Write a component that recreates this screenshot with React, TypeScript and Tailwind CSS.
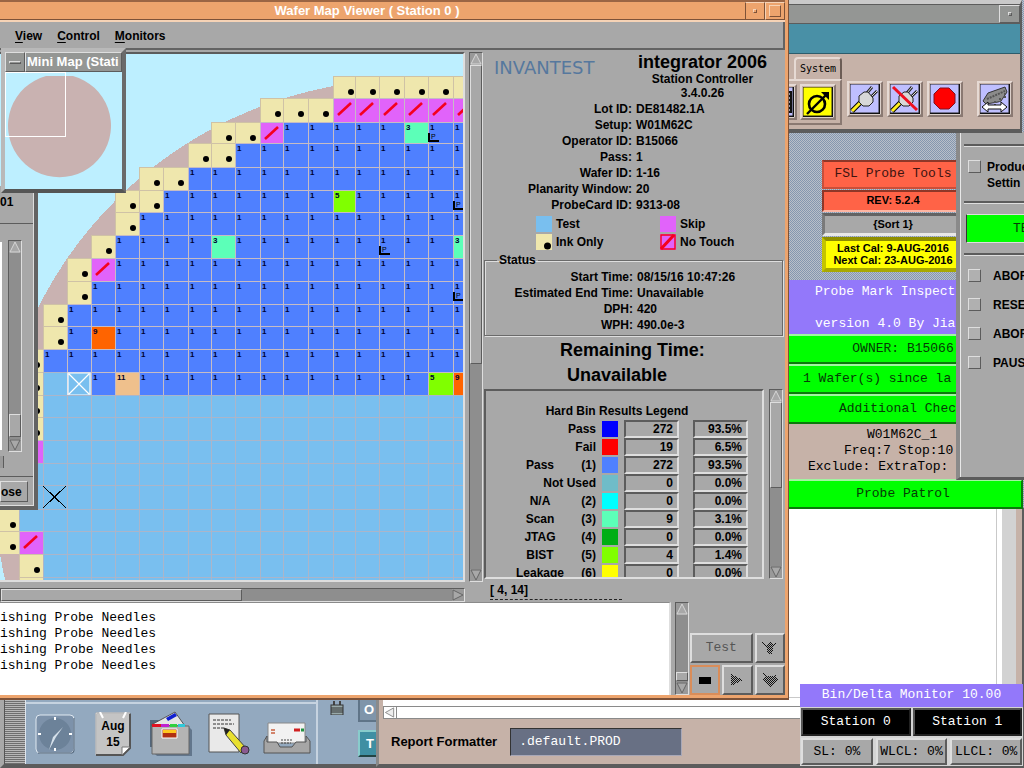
import type { ReactNode } from "react";

const RAISED = "border-2 border-t-[#dedede] border-l-[#dedede] border-r-[#5c5c5c] border-b-[#5c5c5c]";
const THIN = "border border-t-[#dedede] border-l-[#dedede] border-r-[#5c5c5c] border-b-[#5c5c5c]";
const SUNKEN = "border-2 border-t-[#5c5c5c] border-l-[#5c5c5c] border-r-[#dedede] border-b-[#dedede]";
const SANS = "font-['Liberation_Sans',sans-serif]";
const MONO = "font-['Liberation_Mono',monospace] font-normal text-[13px] leading-4";

/* ---------- wafer map ---------- */

const COL_X = [-5, 19, 43, 67, 91, 115, 139, 163, 188, 211, 235, 260, 283, 308, 333, 355, 379, 404, 428, 453, 477];
const ROW_Y = [76, 98, 122, 143, 167, 190, 212, 235, 258, 281, 304, 326, 349, 372, 395, 417, 440, 463, 485, 509, 531, 554, 577, 600];

// "." off wafer, o ink only, n no touch, t test, s selected, other letters are bins
const ROWS = [
  "..............oooooo",
  "...........ooonnnnnn",
  ".........oon11111311",
  "........oo1111111111",
  "......oo111111111111",
  ".....oo1111111511111",
  ".....o11111111111111",
  "....o111131111111113",
  "...on111111111111111",
  "...o1111111111111111",
  "..o11111111111111111",
  "..o19111111111111111",
  ".o111111111111111111",
  ".ots1e11111111111159",
  ".otttttttttttttttttt",
  ".otttttttttttttttttt",
  ".ntttttttttttttttttt",
  ".ttttttttttttttttttt",
  ".ttttttttttttttttttt",
  "ottttttttttttttttttt",
  "ontttttttttttttttttt",
  ".otttttttttttttttttt",
  ".otttttttttttttttttt",
].map((r) => r.padEnd(20, "1"));

const FILL: Record<string, string> = {
  o: "#efe7ad", n: "#e163fa", t: "#79bfef", s: "#79bfef",
  "1": "#4f80ff", "3": "#5cffb8", "5": "#80ff00", "9": "#ff6400", e: "#efc08c",
};

const PROBES: [number, number][] = [[2, 18], [5, 19], [7, 16], [9, 19]];

function WaferMap() {
  return (
    <svg className="block h-[526px] w-full" viewBox="0 54 463 526" preserveAspectRatio="xMinYMin slice" shapeRendering="crispEdges">
      <rect x="0" y="54" width="600" height="526" fill="#bdefff" />
      <ellipse cx="410" cy="490" rx="415" ry="411" fill="#c9b2b1" />
      {ROWS.map((row, r) =>
        row.split("").map((k, c) => {
          if (k === ".") return null;
          const x = COL_X[c];
          const y = ROW_Y[r];
          const w = COL_X[c + 1] - x;
          const h = ROW_Y[r + 1] - y;
          const line = k === "t" ? "#abb5c9" : k === "o" ? "#cfc2a6" : "#c6bcc4";
          return (
            <g key={`${r}-${c}`}>
              <rect x={x} y={y} width={w} height={h} fill={line} />
              <rect x={x + 1} y={y + 1} width={w - 1} height={h - 1} fill={FILL[k]} />
              {k === "o" && <circle cx={x + 18} cy={y + 16} r="3" fill="#000" shapeRendering="auto" />}
              {k === "n" && <path d={`M${x + 5} ${y + 17}L${x + 18} ${y + 5}`} stroke="#f5001e" strokeWidth="2.6" shapeRendering="auto" />}
              {/[1359e]/.test(k) && (
                <text x={x + 2} y={y + 8} fontSize="8" fontWeight="700" fontFamily="Liberation Sans, sans-serif" fill="#000030">
                  {k === "e" ? "11" : k}
                </text>
              )}
              {k === "s" && (
                <path d={`M${x + 1} ${y + 1}h${w - 2}v${h - 1}h-${w - 2}zM${x + 2} ${y + 2}l${w - 4} ${h - 3}M${x + w - 2} ${y + 2}l-${w - 4} ${h - 3}`} fill="none" stroke="#fff" strokeWidth="1.2" shapeRendering="auto" />
              )}
            </g>
          );
        })
      )}
      {PROBES.map(([r, c]) => (
        <g key={`p${r}-${c}`}>
          <path d={`M${COL_X[c] + 1} ${ROW_Y[r] + 11}v8h10`} fill="none" stroke="#000" strokeWidth="2" />
          <text x={COL_X[c] + 3} y={ROW_Y[r] + 17} fontSize="7" fontFamily="Liberation Sans, sans-serif" fontWeight="400" fill="#000">P</text>
        </g>
      ))}
      <path d="M43 486l23 22M66 486l-23 22" stroke="#000" strokeWidth="1" fill="none" />
    </svg>
  );
}

/* ---------- scroll bars ---------- */

type Dir = "up" | "down" | "left" | "right";

function Arrow({ dir }: { dir: Dir }) {
  const shape = { up: "6,1 11,11 1,11", down: "1,1 11,1 6,11", left: "1,6 11,1 11,11", right: "1,1 11,6 1,11" }[dir];
  return (
    <svg className="block size-3 shrink-0" viewBox="0 0 12 12">
      <rect width="12" height="12" fill="#999" />
      <polygon points={shape} fill="#a8a8a8" stroke={dir === "up" || dir === "left" ? "#d6d6d6" : "#666"} />
    </svg>
  );
}

function Scroll({ parts, horizontal = false, start = true, className = "" }: { parts: [number, number, number]; horizontal?: boolean; start?: boolean; className?: string }) {
  return (
    <div aria-hidden className={`flex shrink-0 border border-t-[#5c5c5c] border-l-[#5c5c5c] border-r-[#dedede] border-b-[#dedede] bg-[#8e8e8e] ${horizontal ? "flex-row" : "w-3.5 flex-col"} ${className}`}>
      {start && <Arrow dir={horizontal ? "left" : "up"} />}
      <div style={{ flexGrow: parts[0] }} />
      <div className={`bg-[#a8a8a8] ${THIN}`} style={{ flexGrow: parts[1] }} />
      <div style={{ flexGrow: parts[2] }} />
      <Arrow dir={horizontal ? "right" : "down"} />
    </div>
  );
}

/* ---------- wafer map viewer ---------- */

const LOT: [string, string][] = [
  ["Lot ID:", "DE81482.1A"], ["Setup:", "W01M62C"], ["Operator ID:", "B15066"], ["Pass:", "1"],
  ["Wafer ID:", "1-16"], ["Planarity Window:", "20"], ["ProbeCard ID:", "9313-08"],
];
const STATUS: [string, string][] = [
  ["Start Time:", "08/15/16 10:47:26"], ["Estimated End Time:", "Unavailable"], ["DPH:", "420"], ["WPH:", "490.0e-3"],
];
const BINS: [string, string, string, string, string][] = [
  ["Pass", "", "bg-[#0000ff]", "272", "93.5%"],
  ["Fail", "", "bg-[#ff0000]", "19", "6.5%"],
  ["Pass", "(1)", "bg-[#4f80ff]", "272", "93.5%"],
  ["Not Used", "", "bg-[#6fbcc8]", "0", "0.0%"],
  ["N/A", "(2)", "bg-[#00ffff]", "0", "0.0%"],
  ["Scan", "(3)", "bg-[#5cffb8]", "9", "3.1%"],
  ["JTAG", "(4)", "bg-[#00ae14]", "0", "0.0%"],
  ["BIST", "(5)", "bg-[#80ff00]", "4", "1.4%"],
  ["Leakage", "(6)", "bg-[#ffff00]", "0", "0.0%"],
];

function Facts({ rows }: { rows: [string, string][] }) {
  return (
    <dl className="grid grid-cols-[148px_1fr] gap-x-1 leading-4">
      {rows.map(([k, v]) => (
        <div key={k} className="contents">
          <dt className="text-right whitespace-nowrap">{k}</dt>
          <dd className="whitespace-nowrap">{v}</dd>
        </div>
      ))}
    </dl>
  );
}

function LegendItem({ kind, label }: { kind: "test" | "skip" | "ink" | "touch"; label: string }) {
  const fill = { test: "#79bfef", skip: "#e163fa", ink: "#efe7ad", touch: "#e163fa" }[kind];
  return (
    <div className="flex h-[18px] items-center gap-1">
      <svg className="size-4" viewBox="0 0 16 16">
        <rect width="16" height="16" fill={fill} />
        {kind === "ink" && <circle cx="11.5" cy="12" r="3.5" />}
        {kind === "touch" && (
          <>
            <path d="M1 1h14v14h-14z" fill="none" stroke="#f5001e" strokeWidth="1.4" />
            <path d="M1 15L14 1" stroke="#f5001e" strokeWidth="3" />
          </>
        )}
      </svg>
      {label}
    </div>
  );
}

function InfoPanel() {
  return (
    <section className="flex min-w-0 flex-1 flex-col pt-0.5">
      <header className="flex items-start justify-between pr-[18px] pb-px pl-2.5">
        <div className="pt-1 font-['DejaVu_Sans',sans-serif] text-[18px] leading-6 font-normal text-[#56789e]">INVANTEST</div>
        <div className="text-center">
          <h1 className="text-[18px] leading-5">integrator 2006</h1>
          <p className="leading-[14px]">Station Controller</p>
          <p className="leading-[14px]">3.4.0.26</p>
        </div>
      </header>
      <Facts rows={LOT} />
      <div className="grid grid-cols-[124px_1fr] pt-0.5 pl-[52px]">
        <LegendItem kind="test" label="Test" />
        <LegendItem kind="skip" label="Skip" />
        <LegendItem kind="ink" label="Ink Only" />
        <LegendItem kind="touch" label="No Touch" />
      </div>
      <fieldset className="mt-px mr-0.5 border border-[#6a6a6a] pt-px pb-0.5 shadow-[inset_1px_1px_0_#dedede,1px_1px_0_#dedede]">
        <legend className="ml-3 px-0.5 leading-4">Status</legend>
        <Facts rows={STATUS} />
      </fieldset>
      <div className="pt-0.5 text-[18px] leading-[25px]">
        <p className="pl-[76px]">Remaining Time:</p>
        <p className="pl-[83px]">Unavailable</p>
      </div>
      <div className="mt-px flex h-[190px] justify-between pr-0.5">
        <div className={`w-[280px] overflow-hidden pt-[11px] ${SUNKEN}`}>
          <table className="table-fixed border-collapse">
            <caption className="pr-1 text-center leading-[18px]">Hard Bin Results Legend</caption>
            <tbody>
              {BINS.map(([name, num, color, count, pct], i) => (
                <tr key={i} className="h-[18px] leading-[14px]">
                  {num ? (
                    <>
                      <td className="w-[82px] pl-[26px] text-center">{name}</td>
                      <td className="w-[28px] text-right whitespace-nowrap">{num}</td>
                    </>
                  ) : (
                    <td colSpan={2} className="w-[110px] text-right">{name}</td>
                  )}
                  <td className="w-[28px] pl-1.5"><div className={`size-4 ${color}`} /></td>
                  <td className="w-[58px]"><div className={`w-[55px] pr-1 text-right ${SUNKEN}`}>{count}</div></td>
                  <td className="w-[70px] pl-[11px]"><div className={`w-[55px] pr-1 text-right ${SUNKEN}`}>{pct}</div></td>
                </tr>
              ))}
            </tbody>
          </table>
        </div>
        <Scroll parts={[0, 87, 80]} />
      </div>
      <p className="pt-0.5 pl-1.5 leading-[18px]">[ 4, 14]</p>
      <div className="ml-1.5 w-[132px] border-t border-dashed border-[#222]" />
    </section>
  );
}

function PadButton({ label, children, className = "" }: { label?: string; children?: ReactNode; className?: string }) {
  return (
    <button type="button" aria-label={label} className={`flex items-center justify-center bg-[#a8a8a8] ${RAISED} ${className}`}>
      {children}
    </button>
  );
}

function Stipple({ d }: { d: string }) {
  return (
    <svg className="size-4" viewBox="0 0 16 16" shapeRendering="crispEdges">
      <defs>
        <pattern id="stipple" width="2" height="2" patternUnits="userSpaceOnUse">
          <rect width="1" height="1" fill="#111" />
          <rect x="1" y="1" width="1" height="1" fill="#111" />
        </pattern>
      </defs>
      <path d={d} fill="url(#stipple)" />
    </svg>
  );
}

function WaferViewer() {
  return (
    <main className="absolute top-0 left-0 h-[700px] w-[789px] bg-[#7d5238] pr-px pb-0.5">
      <div className="flex h-full flex-col bg-[#eda46d] pr-[3px] pb-[3px]">
        <header className="flex h-[22px] shrink-0 border-t-2 border-b-2 border-t-[#9a6544] border-b-[#f6d3b6] text-white">
          <h2 className="flex-1 border-b border-[#7d5238] pr-[11px] text-center text-[13px] leading-[18px]">Wafer Map Viewer ( Station 0 )</h2>
          <button type="button" aria-label="Minimize" className="flex w-5 items-center justify-center border border-t-[#f6d3b6] border-l-[#7d5238] border-r-[#7d5238] border-b-[#7d5238]">
            <span className="size-1 border border-t-[#f6d3b6] border-l-[#f6d3b6] border-r-[#7d5238] border-b-[#7d5238]" />
          </button>
          <button type="button" aria-label="Maximize" className="flex w-5 items-center justify-center border border-t-[#f6d3b6] border-l-[#f6d3b6] border-r-[#7d5238] border-b-[#7d5238]">
            <span className="size-3 border border-t-[#f6d3b6] border-l-[#f6d3b6] border-r-[#7d5238] border-b-[#7d5238]" />
          </button>
        </header>
        <div className="flex min-h-0 flex-1 flex-col bg-[#a8a8a8]">
          <nav className="flex h-[28px] shrink-0 items-center gap-[15px] border-b-2 border-r-2 border-[#636363] pt-px pl-[15px]">
            {["View", "Control", "Monitors"].map((m) => (
              <button key={m} type="button" className="underline-offset-2 first-letter:underline">{m}</button>
            ))}
          </nav>
          <div className="flex h-[552px] shrink-0">
            <div className="flex w-[467px] flex-col pt-0.5">
              <div className="mr-0.5 border-t-2 border-r-2 border-b-2 border-t-[#5c5c5c] border-r-[#dedede] border-b-[#dedede]">
                <WaferMap />
              </div>
              <Scroll horizontal start={false} parts={[0, 241, 211]} className="mt-1.5 mr-0.5 h-3.5" />
            </div>
            <Scroll parts={[0, 299, 207]} className="mt-0.5 mb-5 ml-0.5" />
            <div className="w-px" />
            <InfoPanel />
          </div>
          <div className="flex min-h-0 flex-1">
            <textarea readOnly aria-label="Log" className={`min-w-0 flex-1 resize-none border-t border-r-2 border-t-[#8a8a8a] border-r-[#dedede] bg-white pt-[7px] outline-none ${MONO}`} defaultValue={Array(4).fill("ishing Probe Needles").join("\n")} />
            <Scroll parts={[61, 7, 1]} className="ml-1" />
            <div className="flex w-24 flex-col justify-end">
              <div className="grid grid-cols-3 gap-0.5 pl-px">
                <PadButton className={`col-span-2 h-[30px] text-[#555] ${MONO}`}>Test</PadButton>
                <PadButton label="Raise"><Stipple d="M0 2l5 3L8 1l3 4 5-3-5 6-1 6H6L5 9z" /></PadButton>
                <PadButton label="Stop" className="h-[30px] !border-[#d98d5a]"><span className="h-[7px] w-3 bg-black" /></PadButton>
                <PadButton label="Run"><Stipple d="M2 2l12 6-12 6z" /></PadButton>
                <PadButton label="Lower"><Stipple d="M1 1l4 3h6l4-3-2 4 3 2-8 8-8-8 3-2z" /></PadButton>
              </div>
            </div>
          </div>
        </div>
      </div>
    </main>
  );
}

function SideDialog() {
  return (
    <aside className="absolute top-[186px] left-0 flex h-[324px] w-[38px] flex-col border-r-4 border-b-4 border-r-[#636363] border-b-[#636363] bg-[#a8a8a8] shadow-[inset_-1px_-1px_0_#dedede]">
      <p className="h-[37px] pt-2 leading-4">01</p>
      <div className="mr-px border-t border-[#5c5c5c]" />
      <div className="mt-4 flex h-[212px] gap-1.5">
        <div className="my-0.5 w-0.5 bg-white" />
        <Scroll parts={[164, 21, 2]} />
      </div>
      <div className="mt-1 h-3 w-1 overflow-hidden border-r border-[#5c5c5c] bg-[#999]" />
      <div className="mt-2 mr-px border-t border-[#5c5c5c]" />
      <button type="button" className={`mt-1 mr-1.5 h-[21px] pr-3 text-right ${THIN}`}>ose</button>
    </aside>
  );
}

function MiniMap() {
  return (
    <section className="absolute top-12 left-px flex h-[145px] w-[125px] flex-col border-4 border-t-[#b9b9b9] border-l-[#b9b9b9] border-r-[#6a6a6a] border-b-[#555] bg-[#949694]">
      <header className="flex h-5 shrink-0 text-white">
        <button type="button" aria-label="Window menu" className={`flex w-5 shrink-0 items-center justify-center ${THIN}`}>
          <span className={`h-[3px] w-3 ${THIN}`} />
        </button>
        <h2 className={`min-w-0 flex-1 overflow-hidden pl-px text-[13px] leading-[18px] whitespace-nowrap ${THIN}`}>Mini Map (Stati</h2>
      </header>
      <svg className="block min-h-0 w-full flex-1" viewBox="0 0 117 117" preserveAspectRatio="xMinYMin slice">
        <rect width="130" height="130" fill="#bdefff" />
        <path d="M41 4H68A51.5 51.5 0 1 1 41 4z" fill="#c9b2b1" />
        <rect x="0.5" y="0.5" width="60" height="64" fill="none" stroke="#fff" />
      </svg>
    </section>
  );
}

/* ---------- toolbar window ---------- */

function ToolIcon({ label, bg = "#bfbfff", children }: { label: string; bg?: string; children: ReactNode }) {
  return (
    <button type="button" aria-label={label} className="flex size-9 shrink-0 items-center justify-center border-2 border-t-[#e6dad4] border-l-[#e6dad4] border-r-[#8a7972] border-b-[#8a7972]">
      <svg className="size-[31px]" viewBox="0 0 31 31">
        <rect width="31" height="31" fill="#000" />
        <rect width="29" height="29" fill={bg} stroke="#222" />
        <path d="M30.5 0V30.5H0" stroke="#dcd0ca" fill="none" />
        {children}
      </svg>
    </button>
  );
}

function Plug() {
  return (
    <>
      <path d="M2 27L11 18" stroke="#000" strokeWidth="5" />
      <path d="M2 27L11 18" stroke="#ffef20" strokeWidth="3" />
      <path d="M17 9l5-6M21 13l6-6" stroke="#222" strokeWidth="2.8" />
      <path d="M17 9l5-6M21 13l6-6" stroke="#ddd" strokeWidth="1" />
      <path d="M9 12l5-4h4l5 6v4l-4 4h-6l-4-4z" fill="#d8d8d8" stroke="#222" />
    </>
  );
}

function Toolbar() {
  return (
    <section className="absolute top-0 right-0.5 flex h-[133px] w-[238px] flex-col border-r-2 border-b-4 border-r-[#5c5c5c] border-b-[#5c5c5c] border-t-4 border-t-[#c9c9c9] bg-[#c6b2a8]">
      <header className="flex h-5 shrink-0 justify-end border-y border-y-[#5c5c5c] bg-[#949694]">
        <button type="button" aria-label="Minimize" className={`flex w-[21px] items-center justify-center ${THIN}`}>
          <span className={`size-1 ${THIN}`} />
        </button>
      </header>
      <div className="h-[30px] shrink-0 border-b border-[#2c5c6c] bg-[#4990a6]" />
      <div className="flex gap-[5px] pt-[3px]">
        <div className="w-[58px] shrink-0">
          <div className="ml-2.5 flex h-[22px] w-12 items-center justify-center rounded-t border-t-2 border-r-2 border-l-2 border-t-[#e6dad4] border-r-[#6b5c55] border-l-[#e6dad4] font-['DejaVu_Sans_Mono',monospace] text-[10px] font-normal">System</div>
          <div className="flex h-[46px] items-center justify-end gap-[3px] border-2 border-t-[#e6dad4] border-r-[#8a7972] border-b-[#8a7972] border-l-[#c6b2a8] pr-1">
            <ToolIcon label="List">
              <path d="M14 5h13v20H14zM16 9h10M16 13h10M16 17h10M16 21h10" fill="#9a9aae" stroke="#111" strokeWidth="2" />
            </ToolIcon>
            <ToolIcon label="Diameter" bg="#ffff00">
              <circle cx="14" cy="17" r="8" fill="none" stroke="#000" strokeWidth="2.6" />
              <path d="M4 27L24 7" stroke="#000" strokeWidth="2.4" />
              <path d="M18 5h8v8z" />
            </ToolIcon>
          </div>
        </div>
        <div className="flex flex-1 gap-1 pt-6">
          <ToolIcon label="Connect"><Plug /></ToolIcon>
          <ToolIcon label="Disconnect">
            <Plug />
            <path d="M3 3L27 26" stroke="#ee1020" strokeWidth="3" />
          </ToolIcon>
          <ToolIcon label="Stop">
            <path d="M10 4h9l6 6v9l-6 6h-9l-6-6v-9z" fill="#ff0000" stroke="#801020" />
          </ToolIcon>
          <div className="w-1.5" />
          <ToolIcon label="Transfer">
            <path d="M3 17L8 9l17-6 2 5-6 9-3 1-12 2z" fill="#8b8b8b" stroke="#333" />
            <path d="M7 15l18-8M15 17v4M20 14v4M25 9v5" stroke="#555" strokeWidth="2" strokeDasharray="2 1" />
            <path d="M2 23l6-5v3h13v-3l6 5-6 5v-3H8v3z" fill="#fff" stroke="#111" />
          </ToolIcon>
        </div>
      </div>
    </section>
  );
}

/* ---------- right hand windows ---------- */

function ProbeTools() {
  return (
    <section className="absolute top-[160px] left-[822px] flex w-[142px] flex-col gap-px text-center">
      <div className={`h-[29px] border-2 border-t-[#8f3728] border-r-[#ffa994] border-b-[#c94f3a] border-l-[#c94f3a] bg-[#ff6347] pt-1 text-[#401410] ${MONO}`}>FSL Probe Tools</div>
      <div className="h-[22px] border-2 border-t-[#8f3728] border-r-[#ffa994] border-b-[#ffb5a2] border-l-[#8f3728] bg-[#ff6347] text-[11px] leading-[17px]">REV: 5.2.4</div>
      <div className="h-[23px] border-3 border-t-[#636363] border-r-[#dedede] border-b-[#e8e8e8] border-l-[#7a7a7a] bg-[#a8a8a8] text-[11px] leading-[17px]">{"{Sort 1}"}</div>
      <div className="h-[35px] border-4 border-t-[#8f8f00] border-r-[#ffff80] border-b-[#a8a800] border-l-[#c4c400] bg-[#ffff00] text-[11px] leading-3 whitespace-nowrap">
        <p className="pt-px">Last Cal: 9-AUG-2016</p>
        <p>Next Cal: 23-AUG-2016</p>
      </div>
    </section>
  );
}

const GREEN = "h-[30px] border-y-2 border-r-2 border-t-[#a0f5a0] border-r-[#0a7a0a] border-b-[#0a7a0a] bg-[#00ff00] pt-[5px] whitespace-pre text-[#063a06]";

function ProbeMark() {
  return (
    <section className={`absolute top-[280px] left-[785px] w-[238px] overflow-hidden ${MONO}`}>
      <div className="h-[54px] bg-[#9378fa] pt-1 pl-[30px] whitespace-pre text-white">
        <p>Probe Mark Inspect</p>
        <p className="pt-4">version 4.0 By Jia</p>
      </div>
      <div className={`${GREEN} text-center`}>OWNER: B15066</div>
      <div className={`${GREEN} pl-[18px]`}>1 Wafer(s) since la</div>
      <div className={`${GREEN} pl-[54px]`}>Additional Chec</div>
      <div className="h-[55px] bg-[#c6b2a8] pt-[3px] whitespace-pre">
        <p className="pl-[82px]">W01M62C_1</p>
        <p className="pl-[59px]">Freq:7 Stop:10</p>
        <p className="pl-[23px]">Exclude: ExtraTop:</p>
      </div>
      <div className={`${GREEN} text-center`}>Probe Patrol</div>
    </section>
  );
}

function Check({ children, wide = false }: { children: ReactNode; wide?: boolean }) {
  return (
    <label className={`flex items-start whitespace-nowrap ${wide ? "gap-3" : "gap-1.5"}`}>
      <input type="checkbox" className={`mt-px size-[13px] shrink-0 appearance-none bg-[#b0b0b0] ${THIN}`} />
      <span className="leading-4">{children}</span>
    </label>
  );
}

function OptionsDialog() {
  const rule = "border-t-2 border-b border-t-[#5c5c5c] border-b-[#dedede]";
  return (
    <section className="absolute top-[132px] right-0 flex h-[348px] w-[68px] flex-col overflow-hidden border-b-[3px] border-l-4 border-b-[#5c5c5c] border-l-[#8a8a8a] bg-[#a8a8a8] pl-1 shadow-[inset_1px_0_0_#e8e8e8]">
      <div className={`mt-3 ${rule}`} />
      <div className="mt-3 pl-1"><Check>Produc<br />Settin</Check></div>
      <div className={`mt-2.5 ${rule}`} />
      <button type="button" className={`mt-2.5 ml-0.5 h-[29px] shrink-0 border-y border-l border-t-[#dedede] border-l-[#333] border-b-[#dedede] bg-[#00ff00] pl-[46px] text-left text-[#063a06] ${MONO}`}>TE</button>
      <div className={`mt-2.5 ${rule}`} />
      <div className="mt-3 flex flex-col gap-[13px] pl-1">
        <Check wide>ABOR</Check>
        <Check wide>RESE</Check>
        <Check wide>ABOR</Check>
        <Check wide>PAUS</Check>
      </div>
    </section>
  );
}

function ReportWindow() {
  return (
    <section className="absolute top-[508px] right-0 bottom-0 left-[375px] flex flex-col border-r-2 border-b-4 border-l-4 border-r-[#5c5c5c] border-b-[#5c5c5c] border-l-[#8a8a8a] bg-[#c6b2a8]">
      <div className="flex flex-1 pl-1">
        <div className="flex-1 border-r border-b border-[#c9c9c9] bg-white" />
        <div className="w-[5px] bg-white" />
        <div className="mr-1.5 w-3.5 bg-[#d2d2d2]" />
      </div>
      <div className="ml-1 h-2 bg-white" />
      <div className="mr-6 ml-1 flex h-[13px] items-stretch border border-[#8a8a8a] bg-white">
        <svg className="w-3" viewBox="0 0 12 12"><polygon points="1,6 10,1 10,11" fill="#eee" stroke="#888" /></svg>
        <div className="flex-1 border-l border-[#8a8a8a]" />
      </div>
      <form className="flex h-[45px] items-center gap-[13px] pl-3">
        <label htmlFor="formatter" className="text-[13px]">Report Formatter</label>
        <input id="formatter" defaultValue=".default.PROD" className={`h-7 w-[172px] border border-t-[#333] border-l-[#333] border-r-[#a8a8b8] border-b-[#a8a8b8] bg-[#687084] px-2 text-white outline-none ${MONO}`} />
      </form>
    </section>
  );
}

function BinMonitor() {
  return (
    <section className={`absolute right-px bottom-0.5 flex w-[223px] flex-col bg-[#d4d4d4] text-center ${MONO}`}>
      <h2 className="h-[23px] bg-[#9378fa] leading-[22px] text-white">Bin/Delta Monitor 10.00</h2>
      <div className="grid grid-cols-2 gap-0.5 px-px pt-px">
        {["Station 0", "Station 1"].map((s) => (
          <button key={s} type="button" className="h-[28px] border-2 border-t-[#555] border-l-[#555] border-r-[#222] border-b-[#222] bg-black text-white">{s}</button>
        ))}
      </div>
      <div className="grid grid-cols-3 gap-[3px] px-px pt-0.5 pb-px">
        {["SL: 0%", "WLCL: 0%", "LLCL: 0%"].map((s) => (
          <button key={s} type="button" className={`h-[27px] bg-[#a8a8a8] whitespace-nowrap ${RAISED}`}>{s}</button>
        ))}
      </div>
    </section>
  );
}

/* ---------- front panel ---------- */

function FrontPanel() {
  return (
    <footer className="absolute bottom-0 left-0 flex h-[68px] w-[376px] border-b-4 border-l-4 border-b-[#5c5c5c] border-l-[#a8a8a8] bg-[#93a9bf]">
      <div className="w-[22px] shrink-0 border-r border-r-[#dfe6ee] border-l border-l-[#555] bg-[repeating-linear-gradient(#b8b8b8_0_1px,#6f6f6f_1px_2px)]" />
      <div className="flex h-full shrink-0 border-r-2 border-[#c6d3e0] [&>div]:mt-0.5 [&>div]:flex [&>div]:w-[58px] [&>div]:items-center [&>div]:justify-center [&>div]:border-t-2 [&>div]:border-[#c6d3e0]">
        <div>
          <svg className="size-10" viewBox="0 0 40 40">
            <rect x="1" y="1" width="38" height="38" rx="4" fill="#7d92aa" stroke="#dfe8f0" />
            <path d="M3 39h34q2 0 2-3V4" fill="none" stroke="#465a70" />
            <circle cx="20" cy="20" r="16" fill="#6c8299" />
            <path d="M20 3v3M20 34v3M3 20h3M34 20h3" stroke="#fff" strokeWidth="2" />
            <path d="M28 13L18 23 14 36 21 23z" fill="#d5e0ea" />
          </svg>
        </div>
        <div>
          <svg className="h-11 w-9" viewBox="0 0 36 44">
            <path d="M1 1h34v34l-8 8H1z" fill="#c4c4c4" stroke="#555" />
            <path d="M1 43V1h34" fill="none" stroke="#eee" />
            <path d="M1 43h27l7-7V2" fill="none" stroke="#555" strokeWidth="2" />
            <path d="M27 43v-8h8z" fill="#fff" stroke="#777" />
            <path d="M5 0l3 6M31 0l-3 6" stroke="#fff" strokeWidth="2" />
            <text x="18" y="18" textAnchor="middle" fontSize="12" fontWeight="700" fontFamily="Liberation Sans, sans-serif">Aug</text>
            <text x="18" y="34" textAnchor="middle" fontSize="12" fontWeight="700" fontFamily="Liberation Sans, sans-serif">15</text>
          </svg>
        </div>
        <div>
          <svg className="h-[46px] w-11" viewBox="0 0 44 46">
            <path d="M1 9h22v27H1z" fill="#53667a" />
            <path d="M2 14L26 1l10 14z" fill="#e4e4e4" stroke="#555" />
            <path d="M17 7l9-5 2 3-9 5z" fill="#1020d0" />
            <path d="M40 16l3 3v26H8l-3-3z" fill="#62768c" />
            <path d="M3 15h37v28H3z" fill="#b4b4b4" stroke="#666" />
            <path d="M3 13h9v3H3z" fill="#e01020" /><path d="M12 13h8v3h-8z" fill="#c020d0" /><path d="M21 13h7v3h-7z" fill="#30d040" /><path d="M29 13h7v3h-7z" fill="#30c8d8" />
            <path d="M13 18h15v9H13z" fill="#b03010" stroke="#fff" /><path d="M14 19h13v3H14z" fill="#ffc820" />
          </svg>
        </div>
        <div>
          <svg className="h-[42px] w-11" viewBox="0 0 44 42">
            <path d="M2 1h30v38H2z" fill="#e9e9e9" stroke="#555" />
            <path d="M6 7h18M6 11h21M6 15h12" stroke="#333" strokeDasharray="3 1" />
            <path d="M17 15l6 2 16 18-5 5-15-18z" fill="#e8e030" stroke="#444" />
            <path d="M17 15l6 2-4 5z" fill="#222" />
            <circle cx="38" cy="37" r="4" fill="#8a5a90" stroke="#333" />
          </svg>
        </div>
        <div className="pt-2">
          <svg className="h-8 w-12" viewBox="0 0 48 32">
            <path d="M5 1h37v20H5z" fill="#f2f2f2" stroke="#888" />
            <path d="M8 8h4M8 11h4" stroke="#c86040" strokeWidth="1.5" /><path d="M31 8h6" stroke="#d02020" strokeWidth="3" /><path d="M38 8h3" stroke="#209040" strokeWidth="3" />
            <path d="M4 14L1 19v12h46V19l-4-5v6H33l-4 5H17l-3-5H4z" fill="#a6a6a6" stroke="#555" />
            <path d="M18 18h12M18 21h10" stroke="#444" strokeDasharray="2 1" />
          </svg>
        </div>
      </div>
      <svg className="mt-px ml-3 h-3.5 w-3.5 shrink-0" viewBox="0 0 14 14">
        <path d="M4 6V0M10 6V0" stroke="#444" strokeWidth="2" />
        <rect x="1" y="4" width="12" height="10" fill="#9aa" stroke="#333" /><path d="M1 7h12M1 9h12M1 11h12" stroke="#333" />
      </svg>
      <div className="ml-3.5 flex min-w-0 flex-1 flex-col gap-2 overflow-hidden text-[13px] text-white">
        <button type="button" className="h-[22px] border-b-2 border-l-2 border-[#5f7488] bg-[#7f95aa] pl-1 text-left leading-4">O</button>
        <button type="button" className="h-[27px] border-2 border-r-0 border-t-[#8cc] border-l-[#8cc] border-b-[#244] bg-[#3f8fa3] pl-1.5 text-left">T</button>
      </div>
    </footer>
  );
}

export default function App() {
  return (
    <div className={`relative h-screen w-full overflow-hidden bg-[#8e9fb3] bg-[conic-gradient(#b9bfc9_25%,#8497af_0_50%,#b9bfc9_0_75%,#8497af_0)] bg-size-[2px_2px] text-[12px] leading-4 font-bold text-black ${SANS}`}>
      <ReportWindow />
      <ProbeTools />
      <ProbeMark />
      <OptionsDialog />
      <Toolbar />
      <FrontPanel />
      <BinMonitor />
      <WaferViewer />
      <SideDialog />
      <MiniMap />
    </div>
  );
}
